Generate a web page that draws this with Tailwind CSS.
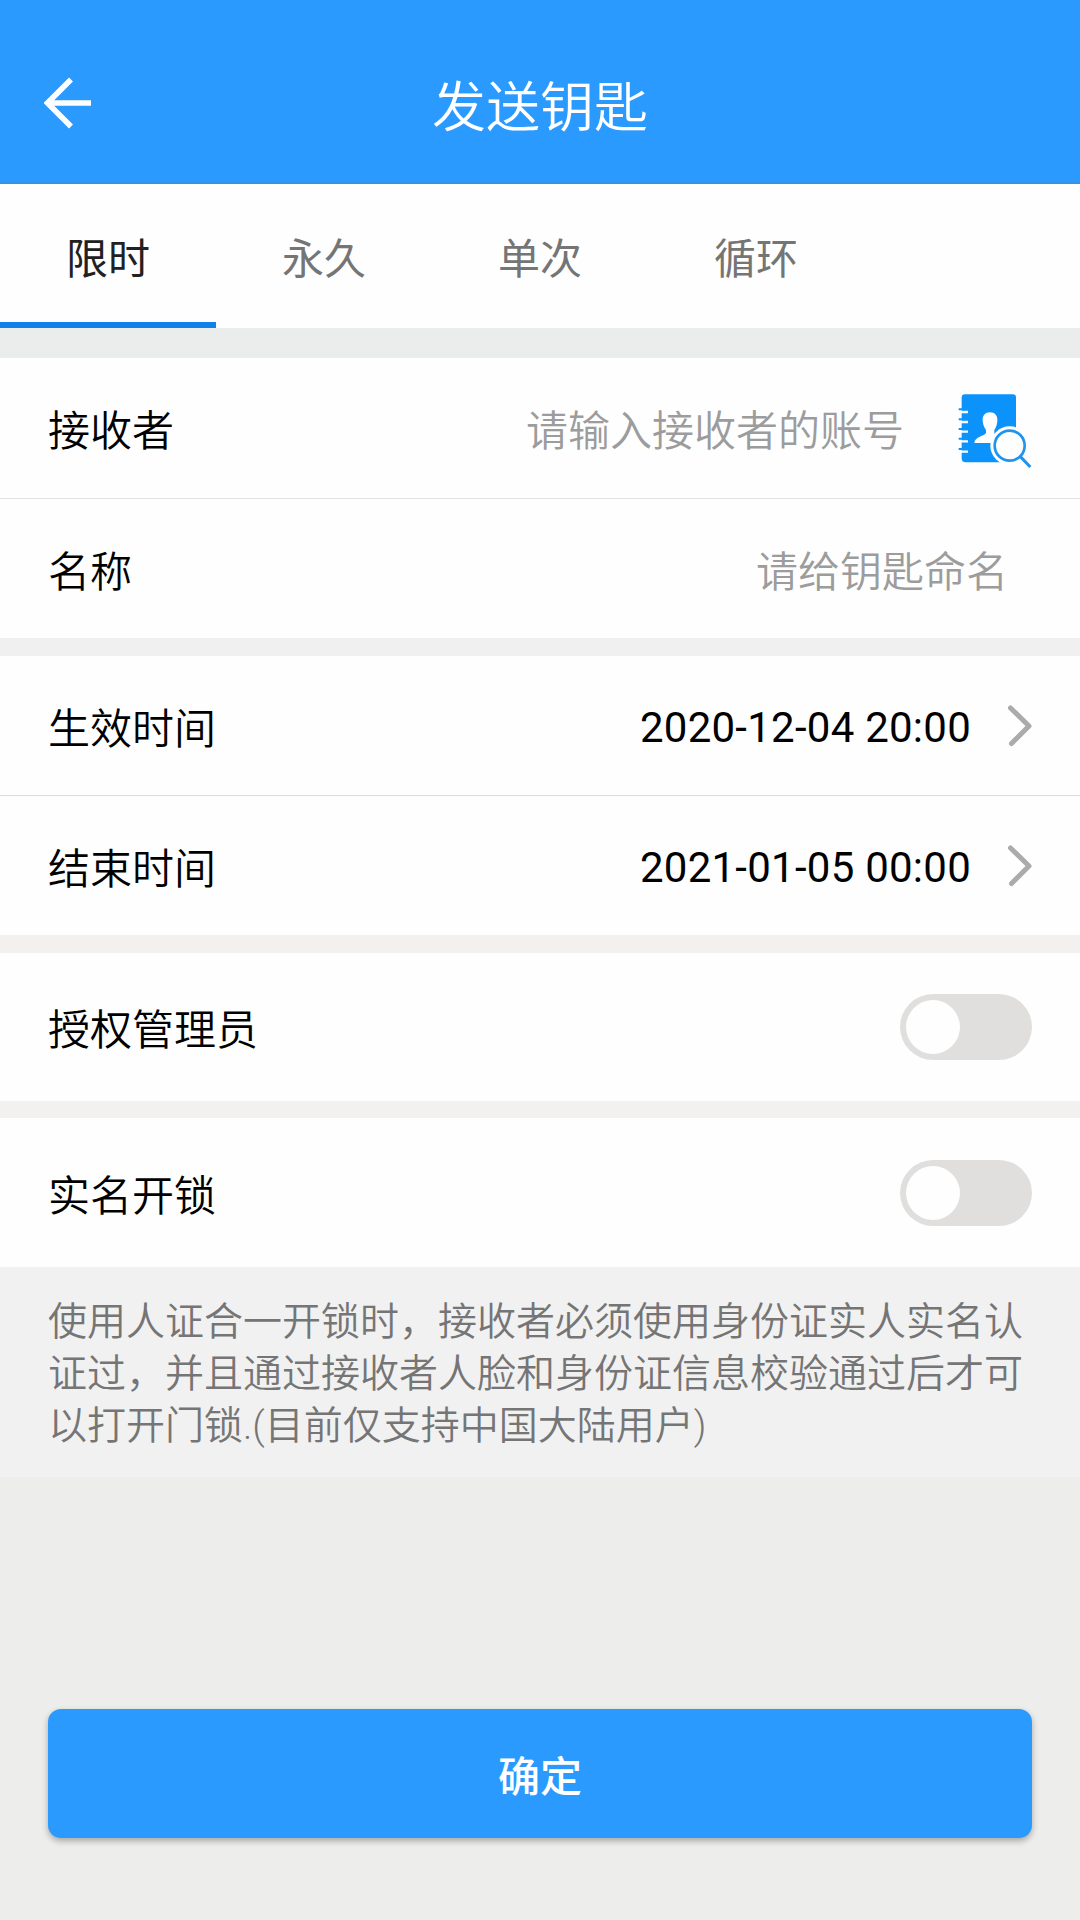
<!DOCTYPE html>
<html lang="zh-CN">
<head>
<meta charset="utf-8">
<meta name="viewport" content="width=1080">
<title>发送钥匙</title>
<script src="https://cdn.jsdelivr.net/npm/@tailwindcss/browser@4"></script>
</head>
<body class="bg-[#ededec]">
<div class="flex h-[1920px] w-[1080px] flex-col overflow-hidden font-['Roboto','Noto_Sans_CJK_SC',sans-serif] text-[42px] font-[350] leading-[60px] text-black">
  <header class="grid h-[184px] shrink-0 grid-cols-[1fr_auto_1fr] items-center border-b-2 border-[#3294e6] bg-[#2a9aff] pt-[24px]">
    <svg class="ml-[44px] h-[52px] w-[48px]" viewBox="0 0 48 52" fill="none" stroke="#fff" stroke-width="5.5"><path d="M27 2.500L3.500 26 27 49.500M3.500 26H47"/></svg>
    <h1 class="pt-[12px] text-[54px] leading-[80px] text-white">发送钥匙</h1>
  </header>

  <nav class="flex h-[144px] shrink-0 bg-[#fefefe] text-center font-normal text-[#757575]">
    <div class="w-[216px] border-b-[6px] border-[#1280ea] pt-[46px] text-[#212121]">限时</div>
    <div class="w-[216px] pt-[46px]">永久</div>
    <div class="w-[216px] pt-[46px]">单次</div>
    <div class="w-[216px] pt-[46px]">循环</div>
  </nav>

  <main class="flex flex-col">
    <section class="border-t-[30px] border-[#ebecec] bg-[#fefefe]">
      <div class="flex h-[141px] items-center border-b border-[#e5e3e1] pl-[48px] pr-[47px]">
        <span class="pt-[8px]">接收者</span>
        <span class="ml-auto pt-[8px] text-[#9c9c9c]">请输入接收者的账号</span>
        <svg class="ml-[53px] mt-[4px] h-[76px] w-[76px]" viewBox="81 66 228 228">
          <path fill="#0c93fb" d="M105 73H248Q258 73 258 83V277H107Q95 277 95 265V83Q95 73 105 73Z"/>
          <path fill="none" stroke="#fff" stroke-width="7" d="M92 126H114M92 156H114M92 185H114M92 214H114M92 245H114"/>
          <path fill="none" stroke="#0c93fb" stroke-width="6" d="M86 118H108M86 148H108M86 177H108M86 206H108M86 237H108"/>
          <path fill="#fff" d="M180 127C166 127 157 137 158 151C158 163 163 173 168 180V189C164 198 134 200 133 219H226V205C218 197 194 197 193 189V180C198 173 202 163 202 151C203 137 194 127 180 127Z"/>
          <circle cx="239" cy="227" r="58" fill="#fefefe"/>
          <circle cx="239" cy="227" r="45" fill="#fefefe" stroke="#1e94ee" stroke-width="8"/>
          <path stroke="#1e94ee" stroke-width="9" d="M271 260L301 291"/>
        </svg>
      </div>
      <div class="flex h-[139px] items-center justify-between pl-[48px] pr-[72px] pt-[8px]">
        <span>名称</span><span class="text-[#9c9c9c]">请给钥匙命名</span>
      </div>
    </section>

    <section class="border-t-[18px] border-[#f0f0f0] bg-[#fefefe]">
      <div class="flex h-[140px] items-center border-b border-[#dcdcdc] px-[48px]">
        <span class="pt-[8px]">生效时间</span><span class="ml-auto pt-[4px] font-normal tracking-[0.25px]">2020-12-04 20:00</span>
        <svg class="ml-[37px] h-[42px] w-[24px]" viewBox="0 0 24 42" fill="none" stroke="#ababab" stroke-width="5" stroke-linecap="round" stroke-linejoin="round"><path d="M2.500 3L21 21 3.500 38.500"/></svg>
      </div>
      <div class="flex h-[139px] items-center px-[48px]">
        <span class="pt-[8px]">结束时间</span><span class="ml-auto pt-[4px] font-normal tracking-[0.25px]">2021-01-05 00:00</span>
        <svg class="ml-[37px] h-[42px] w-[24px]" viewBox="0 0 24 42" fill="none" stroke="#ababab" stroke-width="5" stroke-linecap="round" stroke-linejoin="round"><path d="M2.500 3L21 21 3.500 38.500"/></svg>
      </div>
    </section>

    <section class="flex h-[166px] items-center justify-between border-t-[18px] border-[#f2f1f0] bg-[#fefefe] px-[48px]">
      <span class="pt-[8px]">授权管理员</span>
      <span class="flex h-[66px] w-[132px] items-center rounded-full bg-[#e0dfde] p-[6px]"><span class="size-[54px] rounded-full bg-[#fefefe]"></span></span>
    </section>
    <section class="flex h-[166px] items-center justify-between border-t-[17px] border-[#f2f1f0] bg-[#fefefe] px-[48px]">
      <span class="pt-[8px]">实名开锁</span>
      <span class="flex h-[66px] w-[132px] items-center rounded-full bg-[#e0dfde] p-[6px]"><span class="size-[54px] rounded-full bg-[#fefefe]"></span></span>
    </section>
    <p class="h-[210px] bg-[#f1f1f1] pl-[48px] pt-[29px] text-[39px] leading-[52px] text-[#757575]">使用人证合一开锁时，接收者必须使用身份证实人实名认<br>证过，并且通过接收者人脸和身份证信息校验通过后才可<br>以打开门锁.(目前仅支持中国大陆用户)</p>
  </main>

  <button class="mx-[48px] mt-[232px] h-[129px] shrink-0 rounded-[13px] bg-[#2a9aff] pt-[8px] font-medium text-white shadow-[0_3px_6px_rgba(0,0,0,0.3)]">确定</button>
</div>
</body>
</html>
